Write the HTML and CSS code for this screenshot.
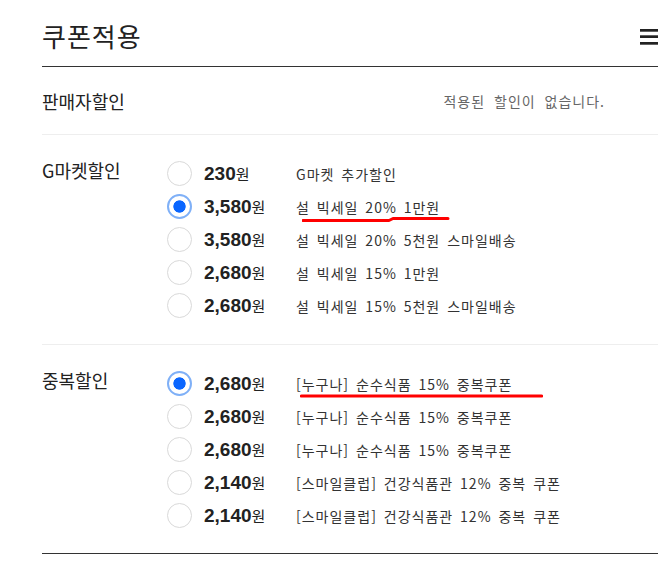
FILE: index.html
```html
<!DOCTYPE html>
<html lang="ko">
<head>
<meta charset="utf-8">
<title>쿠폰적용</title>
<link rel="stylesheet" href="styles.css">
</head>
<body>
<div class="page">
  <header class="head">
    <h1 class="title">쿠폰적용</h1>
    <svg class="menu" width="18" height="16" viewBox="0 0 18 16">
      <rect x="0" y="0" width="18" height="2.7" fill="#222"/>
      <rect x="0" y="6.3" width="18" height="2.7" fill="#222"/>
      <rect x="0" y="13" width="18" height="2.7" fill="#222"/>
    </svg>
  </header>

  <div class="seller">
    <div class="seller-label">판매자할인</div>
    <div class="seller-note">적용된 할인이 없습니다.</div>
  </div>

  <section class="group">
    <div class="group-label">G마켓할인</div>
    <div class="rows">
      <div class="row"><span class="radio"></span><span class="price"><b>230</b>원</span><span class="desc">G마켓 추가할인</span></div>
      <div class="row"><span class="radio on"></span><span class="price"><b>3,580</b>원</span><span class="desc">설 빅세일 20% 1만원<svg class="mark mark1" width="148" height="8" viewBox="0 0 148 8"><path d="M1 6.5 L87 6.5 L91 4.5 L146 4.5" fill="none" stroke="#f00" stroke-width="3" stroke-linecap="round" stroke-linejoin="round"/></svg></span></div>
      <div class="row"><span class="radio"></span><span class="price"><b>3,580</b>원</span><span class="desc">설 빅세일 20% 5천원 스마일배송</span></div>
      <div class="row"><span class="radio"></span><span class="price"><b>2,680</b>원</span><span class="desc">설 빅세일 15% 1만원</span></div>
      <div class="row"><span class="radio"></span><span class="price"><b>2,680</b>원</span><span class="desc">설 빅세일 15% 5천원 스마일배송</span></div>
    </div>
  </section>

  <section class="group last">
    <div class="group-label">중복할인</div>
    <div class="rows">
      <div class="row"><span class="radio on"></span><span class="price"><b>2,680</b>원</span><span class="desc">[누구나] 순수식품 15% 중복쿠폰<svg class="mark mark2" width="243" height="8" viewBox="0 0 243 8"><path d="M1.5 4 L241.5 4" fill="none" stroke="#f00" stroke-width="3.2" stroke-linecap="round"/></svg></span></div>
      <div class="row"><span class="radio"></span><span class="price"><b>2,680</b>원</span><span class="desc">[누구나] 순수식품 15% 중복쿠폰</span></div>
      <div class="row"><span class="radio"></span><span class="price"><b>2,680</b>원</span><span class="desc">[누구나] 순수식품 15% 중복쿠폰</span></div>
      <div class="row"><span class="radio"></span><span class="price"><b>2,140</b>원</span><span class="desc">[스마일클럽] 건강식품관 12% 중복 쿠폰</span></div>
      <div class="row"><span class="radio"></span><span class="price"><b>2,140</b>원</span><span class="desc">[스마일클럽] 건강식품관 12% 중복 쿠폰</span></div>
    </div>
  </section>
</div>
</body>
</html>
```

FILE: styles.css
```css
html, body {
  margin: 0;
  padding: 0;
  background: #fff;
}
body {
  overflow: hidden;
  font-family: "Noto Sans CJK KR", "Noto Sans", sans-serif;
  color: #222;
}
.page {
  margin-left: 42px;
  width: 616px;
}
.head {
  height: 67px;
  box-sizing: border-box;
  padding-top: 6px;
  border-bottom: 1px solid #333;
  display: flex;
  align-items: center;
  justify-content: space-between;
}
.title {
  margin: 0;
  font-size: 26px;
  font-weight: 400;
  line-height: 1;
  letter-spacing: 1px;
  color: #222;
}
.menu {
  display: block;
  margin-top: 2px;
}
.seller {
  height: 68px;
  box-sizing: border-box;
  border-bottom: 1px solid #eee;
  display: flex;
  align-items: center;
  justify-content: space-between;
  padding-right: 53px;
  padding-top: 1px;
}
.seller-label {
  font-size: 18px;
  line-height: 26px;
  color: #222;
}
.seller-note {
  font-size: 14px;
  line-height: 20px;
  color: #666;
  letter-spacing: 1px;
  word-spacing: 4px;
}
.group {
  display: flex;
  padding: 22px 0 22px;
  border-bottom: 1px solid #eee;
}
.group.last {
  padding-bottom: 21px;
  border-bottom-color: #333;
}
.group-label {
  width: 125px;
  flex: none;
  font-size: 18px;
  line-height: 26px;
  color: #222;
}
.rows {
  display: flex;
  flex-direction: column;
}
.row {
  height: 33px;
  display: flex;
  align-items: center;
}
.radio {
  flex: none;
  width: 25px;
  height: 25px;
  box-sizing: border-box;
  border-radius: 50%;
  border: 1.5px solid #d9d9d9;
  background: #fff;
  margin-right: 12px;
}
.radio.on {
  border: 2px solid #7fb0f7;
  background: radial-gradient(circle, #0a66ff 0 5.8px, #fff 6.5px);
}
.price {
  width: 92px;
  flex: none;
  font-size: 15px;
  color: #222;
  white-space: nowrap;
}
.price b {
  font-family: "Liberation Sans", Arial, sans-serif;
  font-size: 19px;
  font-weight: 700;
  color: #222;
}
.desc {
  position: relative;
  font-size: 14px;
  line-height: 20px;
  color: #333;
  letter-spacing: 1px;
  word-spacing: 2px;
  white-space: nowrap;
}
.mark {
  position: absolute;
  display: block;
}
.mark1 {
  left: 6px;
  top: 17px;
}
.mark2 {
  left: 4px;
  top: 18px;
}
```
